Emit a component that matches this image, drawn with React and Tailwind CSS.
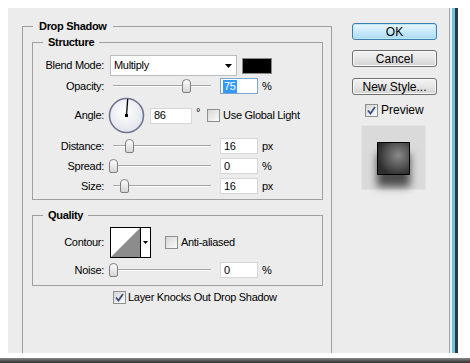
import React from "react";

const font = "font-['Liberation_Sans',Arial,sans-serif]";
const small = "text-[11px] leading-[13px] tracking-[-0.3px]";

function Check({ checked }) {
  return (
    <span className="w-[13px] h-[13px] shrink-0 border border-[#8e8f8f] bg-gradient-to-br from-[#d6d6d6] to-[#fbfbfb] flex items-center justify-center">
      {checked && (
        <svg width="9" height="9" viewBox="0 0 9 9">
          <path d="M1 4.5 L3.5 7.5 L8 1" fill="none" stroke="#3d4f7e" strokeWidth="1.8" />
        </svg>
      )}
    </span>
  );
}

function Thumb({ left }) {
  return (
    <svg className="absolute top-[1px]" style={{ left }} width="9" height="14" viewBox="0 0 9 14">
      <defs>
        <linearGradient id="tg" x1="0" y1="0" x2="0" y2="1">
          <stop offset="0" stopColor="#ffffff" />
          <stop offset="1" stopColor="#d4d4d4" />
        </linearGradient>
      </defs>
      <path d="M0.5 4 Q0.5 0.5 4.5 0.5 Q8.5 0.5 8.5 4 L8.5 12 Q8.5 13.5 7 13.5 L2 13.5 Q0.5 13.5 0.5 12 Z" fill="url(#tg)" stroke="#7f7f7f" />
    </svg>
  );
}

function Slider({ pos }) {
  return (
    <div className="relative ml-[4px] w-[110px] h-[16px] flex items-center">
      <div className="ml-[5px] w-[98px] h-[2px] border-t border-[#a4a4a4] bg-white" />
      <Thumb left={pos} />
    </div>
  );
}

function Field({ value, width = "w-[38px]", selected }) {
  return (
    <div
      className={`${width} h-[16px] bg-white border ${
        selected ? "border-[#7ea4cf]" : "border-[#d6d6d6]"
      } flex items-center pl-[2px]`}
    >
      {selected ? (
        <span className="bg-[#3399ff] text-white px-[1px]">{value}</span>
      ) : (
        <span className="pl-[1px]">{value}</span>
      )}
    </div>
  );
}

function Label({ children }) {
  return <span className="w-[71px] shrink-0 text-right">{children}</span>;
}

function SliderRow({ label, pos, value, unit, selected, className = "" }) {
  return (
    <div className={`flex items-center h-[16px] ${className}`}>
      <Label>{label}</Label>
      <Slider pos={pos} />
      <div className="ml-[2px]">
        <Field value={value} selected={selected} />
      </div>
      <span className="ml-[4px]">{unit}</span>
    </div>
  );
}

function Legend({ children, pad = "px-[5px]" }) {
  return (
    <legend className={`ml-[10px] ${pad} font-bold text-[11px] leading-[13px] tracking-[-0.3px]`}>
      {children}
    </legend>
  );
}

function Button({ children, primary }) {
  return (
    <div
      className={`w-[85px] h-[17px] rounded-[3px] border flex items-center justify-center text-[12px] leading-[14px] tracking-normal ${
        primary
          ? "border-[#3c7fb1] bg-gradient-to-b from-[#e8f6fd] via-[#c9eafb] to-[#a9daf5] shadow-[inset_0_0_0_1px_#bfe6f9]"
          : "border-[#707070] bg-gradient-to-b from-[#f3f3f3] via-[#e6e6e6] to-[#d2d2d2] shadow-[inset_0_0_0_1px_#fbfbfb]"
      }`}
    >
      {children}
    </div>
  );
}

function Dial() {
  return (
    <svg width="37" height="37" viewBox="0 0 37 37" className="ml-[4px] shrink-0">
      <defs>
        <radialGradient id="dg" cx="0.45" cy="0.4" r="0.6">
          <stop offset="0" stopColor="#ffffff" />
          <stop offset="1" stopColor="#e2e4ec" />
        </radialGradient>
      </defs>
      <circle cx="18.5" cy="18.5" r="17" fill="url(#dg)" stroke="#6f7492" strokeWidth="1.6" />
      <line x1="18.5" y1="18.5" x2="19.7" y2="2" stroke="#000" strokeWidth="1.3" />
      <rect x="17" y="17" width="3" height="3" fill="#000" />
    </svg>
  );
}

function Contour() {
  return (
    <div className="ml-[6px] w-[41px] h-[31px] border border-black bg-white flex">
      <svg width="29" height="29" viewBox="0 0 29 29">
        <polygon points="0,29 29,0 29,29" fill="#8c8c8c" />
      </svg>
      <div className="w-[10px] border-l border-black flex items-center justify-center">
        <svg width="5" height="3" viewBox="0 0 5 3">
          <polygon points="0,0 5,0 2.5,3" fill="#000" />
        </svg>
      </div>
    </div>
  );
}

export default function App() {
  return (
    <div className={`w-[470px] h-[363px] bg-white flex flex-col overflow-hidden text-black ${font} ${small}`}>
      <div className="flex shrink-0 pt-[8px] pl-[8px] h-[353px]">
        <div className="w-[442px] h-[345px] bg-[#ececec] border-r border-[#a3a3a3] flex pt-[12px] pl-[14px] overflow-hidden">
          <fieldset className="w-[310px] m-0 p-0 min-w-0 border border-b-0 border-[#a0a0a0]">
            <Legend pad="px-[6px]">Drop Shadow</Legend>

            <fieldset className="ml-[9px] mt-[3px] w-[291px] m-0 p-0 border border-[#a0a0a0]">
              <Legend>Structure</Legend>
              <div className="pt-[6px] pb-[5px]">
                <div className="flex items-center h-[21px]">
                  <Label>Blend Mode:</Label>
                  <div className="ml-[6px] w-[127px] h-[21px] bg-white border border-[#bcbcbc] flex items-center justify-between pl-[3px] pr-[4px]">
                    <span className="text-[11px]">Multiply</span>
                    <svg width="7" height="4" viewBox="0 0 7 4">
                      <polygon points="0,0 7,0 3.5,4" fill="#000" />
                    </svg>
                  </div>
                  <div className="ml-[5px] w-[30px] h-[16px] bg-black border border-[#8a8a8a]" />
                </div>

                <SliderRow className="mt-[2px]" label="Opacity:" pos={74} value="75" unit="%" selected />

                <div className="flex items-center h-[37px] mt-[3px]">
                  <Label>Angle:</Label>
                  <Dial />
                  <div className="ml-[5px]">
                    <Field value="86" width="w-[42px]" />
                  </div>
                  <span className="ml-[4px] self-start mt-[9px]">°</span>
                  <div className="ml-[7px] flex items-center">
                    <Check />
                    <span className="ml-[3px]">Use Global Light</span>
                  </div>
                </div>

                <SliderRow className="mt-[4px]" label="Distance:" pos={17} value="16" unit="px" />
                <SliderRow className="mt-[4px]" label="Spread:" pos={1} value="0" unit="%" />
                <SliderRow className="mt-[4px]" label="Size:" pos={12} value="16" unit="px" />
              </div>
            </fieldset>

            <fieldset className="ml-[9px] mt-[9px] w-[291px] m-0 p-0 border border-[#a0a0a0]">
              <Legend>Quality</Legend>
              <div className="pt-[5px] pb-[7px]">
                <div className="flex items-center h-[31px]">
                  <Label>Contour:</Label>
                  <Contour />
                  <div className="ml-[14px] flex items-center">
                    <Check />
                    <span className="ml-[3px]">Anti-aliased</span>
                  </div>
                </div>
                <SliderRow className="mt-[4px]" label="Noise:" pos={1} value="0" unit="%" />
              </div>
            </fieldset>

            <div className="mt-[5px] ml-[90px] flex items-center h-[13px]">
              <Check checked />
              <span className="ml-[2px]">Layer Knocks Out Drop Shadow</span>
            </div>
          </fieldset>

          <div className="ml-[20px] w-[85px] flex flex-col">
            <div className="mt-[3px]">
              <Button primary>OK</Button>
            </div>
            <div className="mt-[10px]">
              <Button>Cancel</Button>
            </div>
            <div className="mt-[11px]">
              <Button>New Style...</Button>
            </div>
            <div className="mt-[9px] ml-[13px] flex items-center h-[13px]">
              <Check checked />
              <span className="ml-[3px] text-[12px] tracking-normal">Preview</span>
            </div>
            <div className="mt-[8px] ml-[9px] w-[65px] h-[65px] bg-[#dadada] border border-[#e4e4e4] pt-[16px] pl-[15px]">
              <div className="w-[33px] h-[33px] border border-black bg-[radial-gradient(circle_at_65%_40%,#8a8a8a,#2e2e2e_75%)] shadow-[0_12px_8px_rgba(0,0,0,0.65)]" />
            </div>
          </div>
        </div>
        <div className="w-[2px] h-[345px] bg-[#e6f5fb]" />
        <div className="w-[3px] h-[345px] bg-[#6fc3e0]" />
        <div className="w-[3px] h-[345px] bg-[#2f3b3d]" />
      </div>
      <div className="h-[5px] shrink-0" />
      <div className="h-[5px] shrink-0 bg-gradient-to-b from-[#8a8a8a] to-[#2e2e2e]" />
    </div>
  );
}
